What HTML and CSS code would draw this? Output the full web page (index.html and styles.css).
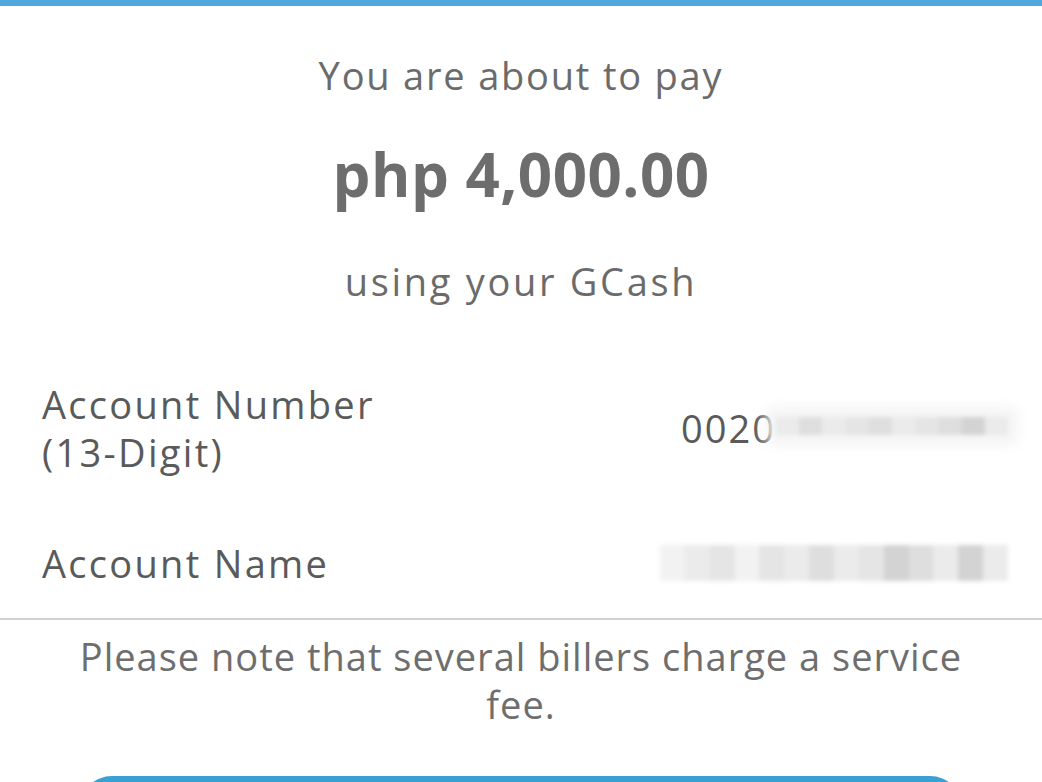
FILE: index.html
```html
<!DOCTYPE html>
<html lang="en">
<head>
  <meta charset="UTF-8">
  <meta name="viewport" content="width=device-width, initial-scale=1.0">
  <title>Confirm Payment</title>
  <link rel="stylesheet" href="styles.css">
</head>
<body>
  <div class="topbar"></div>

  <div class="sheet">
    <!-- amount summary -->
    <div class="summary">
      <p class="lead">You are about to pay</p>
      <p class="amount">php 4,000.00</p>
      <p class="lead lead-sub">using your GCash</p>
    </div>

    <!-- account details -->
    <div class="details">
      <div class="row">
        <div class="label">Account Number<br>(13-Digit)</div>
        <div class="value">0020<span class="mask mask-number"><i class="a"></i><i class="b"></i><i class="a"></i><i class="c"></i><i class="b"></i><i class="a"></i><i class="c"></i><i class="b"></i><i class="d"></i><i class="a"></i></span></div>
      </div>
      <div class="row row-name">
        <div class="label">Account Name</div>
        <div class="value"><span class="mask mask-name"><i class="e"></i><i class="a"></i><i class="c"></i><i class="e"></i><i class="c"></i><i class="a"></i><i class="b"></i><i class="a"></i><i class="c"></i><i class="d"></i><i class="b"></i><i class="a"></i><i class="d"></i><i class="a"></i></span></div>
      </div>
    </div>

    <p class="note">Please note that several billers charge a service fee.</p>

    <!-- only the top edge of the pay button is on screen -->
    <button class="pay" type="button" aria-label="Confirm"></button>
  </div>
</body>
</html>
```

FILE: styles.css
```css
body {
  margin: 0;
  background: #fff;
  font-family: "Open Sans", "Liberation Sans", sans-serif;
  color: #5a5a5a;
  overflow: hidden;
  height: 782px;
}
.topbar {
  height: 6px;
  background: #4fa9dd;
}
.sheet {
  display: flex;
  flex-direction: column;
}
.summary {
  text-align: center;
  padding-top: 46px;
}
.summary p {
  margin: 0;
}
.lead {
  font-size: 38px;
  line-height: 46px;
  letter-spacing: 1.8px;
  color: #6b6b6b;
}
.summary .amount {
  margin-top: 41px;
  font-size: 60px;
  font-weight: 700;
  line-height: 70px;
  letter-spacing: 0.5px;
  color: #6d6d6d;
}
.summary .lead-sub {
  margin-top: 49px;
  letter-spacing: 2.7px;
}
.details {
  padding: 76px 34px 31px 42px;
}
.row {
  display: flex;
  justify-content: space-between;
  align-items: center;
}
.row-name {
  margin-top: 63px;
}
.label {
  font-size: 38px;
  line-height: 48px;
  letter-spacing: 2.3px;
  color: #5a5a5a;
}
.value {
  display: flex;
  align-items: center;
  font-size: 38px;
  line-height: 48px;
  letter-spacing: 2px;
  color: #5a5a5a;
}
.mask {
  display: flex;
  filter: blur(2px);
}
.mask i {
  display: block;
  flex: 1;
}
.mask-number {
  width: 232px;
  height: 18px;
  margin-top: -4px;
  box-shadow: 0 0 14px 10px #f4f4f4;
}
.mask-name {
  width: 348px;
  height: 36px;
}
.mask .a { background: #ebebeb; }
.mask .b { background: #dedede; }
.mask .c { background: #e5e5e5; }
.mask .d { background: #d3d3d3; }
.mask .e { background: #f2f2f2; }
.note {
  margin: 0;
  border-top: 2px solid #d2d2d2;
  padding: 12px 50px 0;
  text-align: center;
  font-size: 38px;
  line-height: 48px;
  letter-spacing: 1px;
  color: #6e6e6e;
}
.pay {
  margin: 48px 80px 0;
  height: 64px;
  border: none;
  border-radius: 32px;
  background: #3a9fd2;
}
```
